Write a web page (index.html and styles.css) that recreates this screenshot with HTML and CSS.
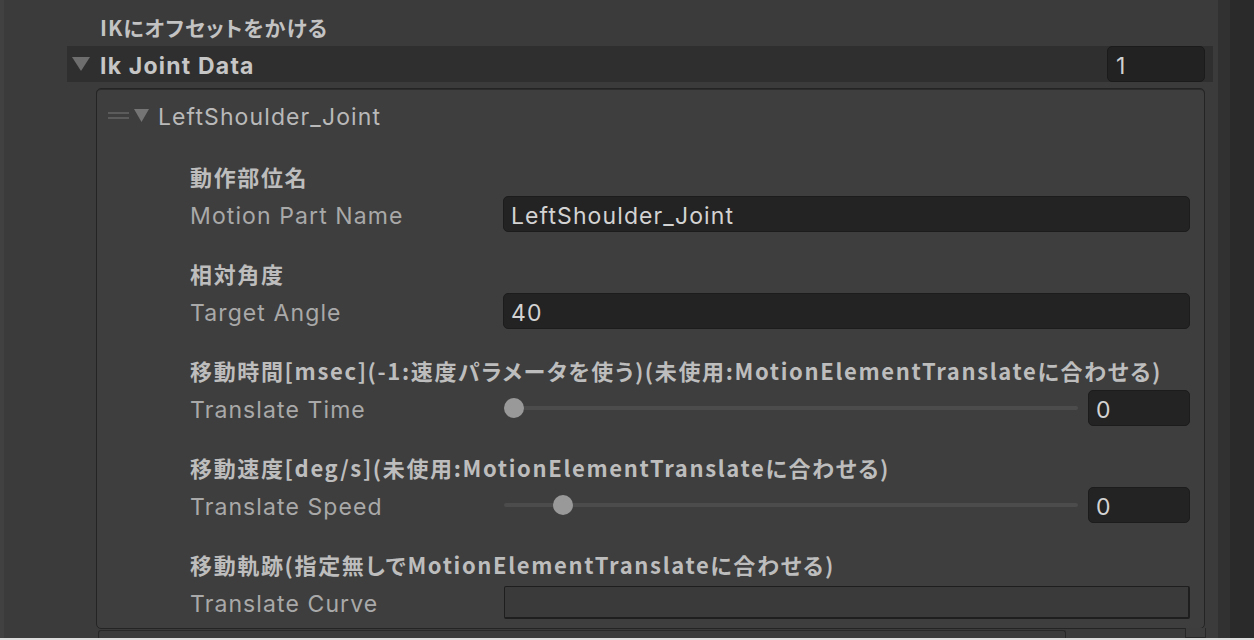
FILE: index.html
```html
<!DOCTYPE html>
<html lang="ja">
<head>
<meta charset="utf-8">
<title>Inspector</title>
<link rel="stylesheet" href="styles.css">
</head>
<body>
<div class="screen">
  <div class="inspector">
    <div class="content">
      <div class="section-title jp">IKにオフセットをかける</div>
      <div class="list-header">
        <svg class="foldout big" viewBox="0 0 18 14"><polygon points="0,0 18,0 9,14"/></svg>
        <span class="list-name">Ik Joint Data</span>
        <div class="count-field">1</div>
      </div>
      <div class="list-box">
        <div class="element-title">
          <span class="handle"><i></i><i></i></span>
          <svg class="foldout small" viewBox="0 0 15 13"><polygon points="0,0 15,0 7.5,13"/></svg>
          <span class="element-name">LeftShoulder_Joint</span>
        </div>

        <div class="group">
          <div class="jp group-title">動作部位名</div>
          <div class="row">
            <span class="label">Motion Part Name</span>
            <div class="field">LeftShoulder_Joint</div>
          </div>
        </div>

        <div class="group">
          <div class="jp group-title">相対角度</div>
          <div class="row">
            <span class="label">Target Angle</span>
            <div class="field">40</div>
          </div>
        </div>

        <div class="group">
          <div class="jp group-title">移動時間[msec](-1:速度パラメータを使う)(未使用:MotionElementTranslateに合わせる)</div>
          <div class="row">
            <span class="label">Translate Time</span>
            <div class="slider">
              <div class="track"><div class="knob-area"><span class="knob" style="left:0%"></span></div></div>
              <div class="field number">0</div>
            </div>
          </div>
        </div>

        <div class="group">
          <div class="jp group-title">移動速度[deg/s](未使用:MotionElementTranslateに合わせる)</div>
          <div class="row">
            <span class="label">Translate Speed</span>
            <div class="slider">
              <div class="track"><div class="knob-area"><span class="knob" style="left:8.8%"></span></div></div>
              <div class="field number">0</div>
            </div>
          </div>
        </div>

        <div class="group">
          <div class="jp group-title">移動軌跡(指定無しでMotionElementTranslateに合わせる)</div>
          <div class="row">
            <span class="label">Translate Curve</span>
            <div class="curve-field"></div>
          </div>
        </div>
      </div>
      <div class="footer">
        <div class="next-field"></div>
        <div class="footer-buttons"></div>
      </div>
    </div>
    <div class="scrollbar"><div class="sb-a"></div><div class="sb-b"></div></div>
  </div>
  <div class="bottom-strip"></div>
</div>
</body>
</html>
```

FILE: styles.css
```css
* { box-sizing: border-box; }
html, body { margin: 0; padding: 0; }
body {
  background: #3b3b3b;
  font-family: Inter, "Noto Sans", sans-serif;
  color: #aaaaaa;
}
.screen {
  width: 1254px;
  height: 640px;
  overflow: hidden;
  display: flex;
  flex-direction: column;
}
.inspector {
  flex: 1;
  display: flex;
  min-height: 0;
}
.content {
  width: 1218px;
  padding-top: 8px;
  display: flex;
  flex-direction: column;
  overflow: hidden;
  border-left: 4px solid #414141;
}
.jp {
  font-family: "Noto Sans CJK JP", sans-serif;
  font-weight: 700;
  font-feature-settings: "palt";
}
.section-title {
  height: 38px;
  line-height: 38px;
  padding-left: 96px;
  font-size: 21px;
  letter-spacing: 1px;
  color: #c3c3c3;
  white-space: nowrap;
}
.list-header {
  height: 38px;
  margin-left: 63px;
  margin-right: 5px;
  background: #2f2f2f;
  display: flex;
  align-items: center;
  padding-left: 5px;
}
.foldout { display: block; }
.foldout polygon { fill: #6e6e6e; }
.foldout.big { width: 18px; height: 14px; }
.foldout.small { width: 15px; height: 13px; }
.foldout.small polygon { fill: #757575; }
.list-name {
  margin-left: 10px;
  padding-top: 4px;
  font-weight: 700;
  font-size: 23px;
  letter-spacing: 1.2px;
  color: #c6c6c6;
}
.count-field {
  margin-left: auto;
  margin-right: 8px;
  width: 98px;
  height: 36px;
  background: #222222;
  border: 1px solid #1b1b1b;
  border-radius: 5px;
  color: #d2d2d2;
  font-size: 23px;
  line-height: 30px;
  padding-top: 4px;
  padding-left: 8px;
}
.list-box {
  margin-top: 6px;
  margin-left: 92px;
  margin-right: 13px;
  border: 1px solid #242424;
  border-radius: 5px;
  background: #3e3e3e;
  padding: 7px 14px 7px 0;
  box-shadow: inset 0 1px 0 #2c2c2c;
}
.element-title {
  height: 38px;
  display: flex;
  align-items: center;
  padding-left: 11px;
  margin-bottom: 23px;
}
.handle {
  width: 21px;
  display: flex;
  flex-direction: column;
  gap: 3px;
  margin-right: 5px;
}
.handle i {
  display: block;
  height: 2px;
  background: #5b5b5b;
}
.element-name {
  margin-left: 9px;
  padding-top: 4px;
  font-size: 23px;
  letter-spacing: 1.1px;
  color: #b9b9b9;
}
.group { margin-bottom: 21px; padding-left: 93px; }
.group:last-child { margin-bottom: 0; }
.group-title {
  height: 38px;
  line-height: 38px;
  font-size: 22px;
  letter-spacing: 1.65px;
  color: #bdbdbd;
  white-space: nowrap;
}
.row {
  height: 38px;
  display: flex;
  align-items: center;
}
.label {
  width: 313px;
  flex: none;
  padding-top: 4px;
  font-size: 23px;
  letter-spacing: 1.1px;
  color: #a9a9a9;
  white-space: nowrap;
}
.field {
  flex: 1;
  height: 36px;
  background: #232323;
  border: 1px solid #1c1c1c;
  border-radius: 5px;
  color: #d3d3d3;
  font-size: 23px;
  letter-spacing: 1.1px;
  line-height: 30px;
  padding-top: 4px;
  padding-left: 7px;
  white-space: nowrap;
}
.slider {
  flex: 1;
  display: flex;
  align-items: center;
}
.track {
  flex: 1;
  height: 4px;
  background: #4c4c4c;
  border-radius: 2px;
  margin-left: 1px;
  margin-right: 10px;
}
.knob-area {
  position: relative;
  height: 4px;
  margin: 0 10px;
}
.knob {
  position: absolute;
  top: 2px;
  width: 20px;
  height: 20px;
  border-radius: 50%;
  background: #999999;
  transform: translate(-50%, -50%);
}
.field.number {
  flex: none;
  width: 102px;
}
.curve-field {
  flex: 1;
  margin-left: 1px;
  height: 33px;
  background: #3a3a3a;
  border: 1px solid #1e1e1e;
  border-bottom-width: 2px;
  border-right-width: 2px;
  border-radius: 2px;
}
.footer {
  margin-top: 1px;
  height: 12px;
  display: flex;
}
.next-field {
  margin-left: 94px;
  width: 968px;
  border: 1px solid #272727;
  border-bottom: none;
  border-radius: 3px 3px 0 0;
  background: #3a3a3a;
}
.footer-buttons {
  margin-left: 119px;
  width: 21px;
  border: 1px solid #272727;
  border-top: none;
  background: #3d3d3d;
  margin-top: -2px;
}
.scrollbar {
  width: 36px;
  display: flex;
}
.sb-a { width: 12px; background: #313131; }
.sb-b { flex: 1; background: #2a2a2a; }
.bottom-strip {
  height: 2px;
  background: #dedede;
}
```
